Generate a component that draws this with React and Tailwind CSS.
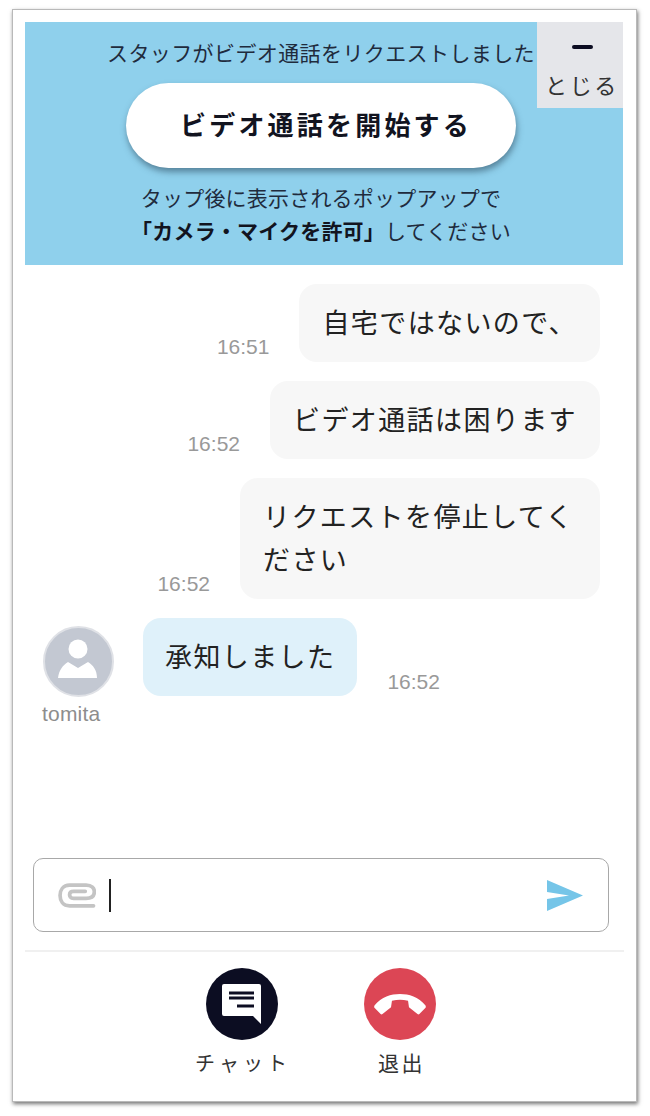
import React from "react";

const jp = "font-['Noto_Sans_CJK_JP','Noto_Sans',sans-serif]";

function Sent({ time, children, className = "" }) {
  return (
    <div className="flex items-end justify-end">
      <span className="mr-[30px] mb-[3px] font-['Liberation_Sans',sans-serif] text-[21px] leading-[24px] text-[#999999]">
        {time}
      </span>
      <div className={`rounded-[18px] bg-[#f7f7f7] px-[23px] pb-[19px] pt-[16px] text-[27px] leading-[43px] tracking-[1.4px] text-[#222222] ${className}`}>
        {children}
      </div>
    </div>
  );
}

export default function App() {
  return (
    <div className={`h-[1116px] w-[650px] overflow-hidden bg-white pl-[12px] pt-[9px] ${jp}`}>
      <div className="flex h-[1093px] w-[625px] flex-col border border-[#b9b9b9] bg-white px-[12px] pt-[12px] shadow-[1px_2px_4px_rgba(0,0,0,0.55)]">
        {/* Video call request banner */}
        <div className="relative h-[243px] w-[598px] shrink-0 bg-[#8fd0ec] pt-[15px] text-center text-[#1f2b3d]">
          <p className="pr-[6px] text-[21px] leading-[30px] tracking-[0.4px]">スタッフがビデオ通話をリクエストしました</p>
          <div className="absolute right-0 top-0 flex h-[86px] w-[86px] flex-col items-center bg-[#e5e6ea] pl-[4px] pt-[23px]">
            <div className="h-[4px] w-[21px] rounded-full bg-[#0c0d22]"></div>
            <span className="mt-[20px] whitespace-nowrap text-[22px] leading-[30px] tracking-[2.7px] text-[#333333]">とじる</span>
          </div>
          <button className="ml-[101px] mt-[16px] flex h-[85px] w-[390px] items-center justify-center rounded-full bg-white pb-[4px] pl-[10px] text-[26px] font-bold tracking-[3.2px] text-[#12141f] shadow-[1px_4px_6px_rgba(40,70,90,0.55)]">
            ビデオ通話を開始する
          </button>
          <p className="mt-[13px] pr-[6px] text-[21px] leading-[33px] tracking-[0.2px]">
            タップ後に表示されるポップアップで
            <br />
            <b className="font-bold text-[#12141f]">「カメラ・マイクを許可」</b>してください
          </p>
        </div>

        {/* Messages */}
        <div className="flex flex-1 flex-col gap-[19px] pr-[24px] pt-[19px]">
          <Sent time="16:51">自宅ではないので、</Sent>
          <Sent time="16:52">ビデオ通話は困ります</Sent>
          <Sent time="16:52" className="w-[360px]">リクエストを停止してください</Sent>
          <div className="flex items-start">
            <div className="ml-[18px] mt-[8px] flex w-[71px] flex-col items-start">
              <div className="h-[71px] w-[71px] rounded-full border-2 border-[#dfe1e6] bg-[#c3c8d2]">
                <svg viewBox="2 2 67 67" className="h-full w-full">
                  <circle cx="35" cy="23" r="9.5" fill="#fff" />
                  <path d="M15 52 C16 44 20 39 25 36 L35 42 L45 36 C50 39 54 44 54 52 Z" fill="#fff" />
                </svg>
              </div>
              <span className="-ml-[1px] mt-[5px] font-['Liberation_Sans',sans-serif] text-[21px] leading-[24px] tracking-[0.2px] text-[#8d8d8d]">tomita</span>
            </div>
            <div className="ml-[29px] rounded-[18px] bg-[#dff1fa] px-[22px] pb-[19px] pt-[16px] text-[27px] leading-[43px] tracking-[1.4px] text-[#222222]">
              承知しました
            </div>
            <span className="ml-[30px] mt-[52px] font-['Liberation_Sans',sans-serif] text-[21px] leading-[24px] text-[#999999]">16:52</span>
          </div>
        </div>

        {/* Input */}
        <div className="ml-[8px] mr-[15px] flex h-[74px] shrink-0 items-center rounded-[10px] border border-[#a8a8a8] pl-[24px] pr-[25px]">
          <svg viewBox="140 135 92 60" className="h-[25px] w-[38px]" fill="none" stroke="#c4c4c4" strokeWidth="9" strokeLinecap="round">
            <path d="M226 190 H168 C152 190 145 178 145 165 C145 152 152 140 168 140 H208 C222 140 228 148 228 156 C228 165 222 172 208 172 H178 C170 172 168 166 168 163 C168 158 172 155 178 155 H206" />
          </svg>
          <div className="ml-[13px] h-[33px] w-[2px] bg-[#222222]"></div>
          <div className="flex-1"></div>
          <svg viewBox="0 0 38 33" className="h-[33px] w-[38px]">
            <path d="M2 1 L38 16.5 L2 32 L2 20 L24 16.5 L2 13 Z" fill="#75c5e8" />
          </svg>
        </div>

        {/* Bottom actions */}
        <div className="mt-[18px] flex h-[151px] shrink-0 justify-center gap-[64px] border-t-2 border-[#f0f0f0] pr-[8px] pt-[16px]">
          <div className="flex w-[94px] flex-col items-center">
            <div className="flex h-[72px] w-[72px] items-center justify-center rounded-full bg-[#0c0d22]">
              <svg viewBox="0 0 40 40" className="h-[40px] w-[40px]">
                <path d="M2 0 H37 Q39 0 39 2 V40 L31 32 H2 Q0 32 0 30 V2 Q0 0 2 0 Z" fill="#fff" />
                <rect x="7" y="7.5" width="25" height="3" fill="#0c0d22" />
                <rect x="7" y="12.5" width="25" height="3" fill="#0c0d22" />
                <rect x="15" y="20.5" width="17" height="3" fill="#0c0d22" />
              </svg>
            </div>
            <span className="mt-[8px] whitespace-nowrap pl-[3px] text-[20px] leading-[30px] tracking-[4px] text-[#333333]">チャット</span>
          </div>
          <div className="flex w-[94px] flex-col items-center">
            <div className="flex h-[72px] w-[72px] items-center justify-center rounded-full bg-[#dc4655]">
              <svg viewBox="0 0 55 22" className="h-[21px] w-[52px]">
                <path d="M0.5 12 C8 3 18 0 27.5 0 C37 0 47 3 54.5 12 C55 13 55 14 54 15 L48 21 Q47 22 46 21 L37 14 L36 7 C30 5.5 25 5.5 19 7 L18 14 L9 21 Q8 22 7 21 L1 15 C0 14 0 13 0.5 12 Z" fill="#fff" />
              </svg>
            </div>
            <span className="mt-[7px] pl-[4px] text-[21px] leading-[30px] tracking-[2.5px] text-[#333333]">退出</span>
          </div>
        </div>
      </div>
    </div>
  );
}
